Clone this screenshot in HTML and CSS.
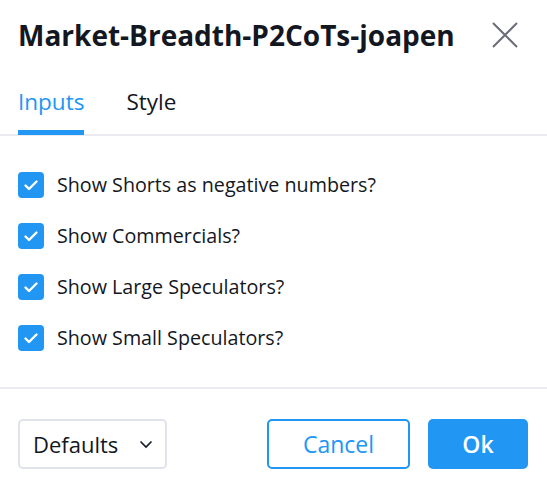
FILE: index.html
```html
<!DOCTYPE html>
<html>
<head>
<meta charset="utf-8">
<link rel="stylesheet" href="styles.css">
</head>
<body>
<div class="dialog">
  <div class="header">
    <div class="title">Market-Breadth-P2CoTs-joapen</div>
    <button class="close" aria-label="Close">
      <svg width="28" height="28" viewBox="0 0 28 28"><path d="M2 2 L26 26 M26 2 L2 26" stroke="#6a6d78" stroke-width="2" fill="none"/></svg>
    </button>
  </div>
  <div class="tabs">
    <div class="tab active">Inputs</div>
    <div class="tab">Style</div>
  </div>
  <div class="content">
    <label class="row"><span class="check"><svg width="26" height="26" viewBox="0 0 26 26"><path d="M7.5 13.5 L11 17 L18.5 9.5" stroke="#fff" stroke-width="2.4" fill="none" stroke-linecap="round" stroke-linejoin="round"/></svg></span><span class="label">Show Shorts as negative numbers?</span></label>
    <label class="row"><span class="check"><svg width="26" height="26" viewBox="0 0 26 26"><path d="M7.5 13.5 L11 17 L18.5 9.5" stroke="#fff" stroke-width="2.4" fill="none" stroke-linecap="round" stroke-linejoin="round"/></svg></span><span class="label">Show Commercials?</span></label>
    <label class="row"><span class="check"><svg width="26" height="26" viewBox="0 0 26 26"><path d="M7.5 13.5 L11 17 L18.5 9.5" stroke="#fff" stroke-width="2.4" fill="none" stroke-linecap="round" stroke-linejoin="round"/></svg></span><span class="label">Show Large Speculators?</span></label>
    <label class="row"><span class="check"><svg width="26" height="26" viewBox="0 0 26 26"><path d="M7.5 13.5 L11 17 L18.5 9.5" stroke="#fff" stroke-width="2.4" fill="none" stroke-linecap="round" stroke-linejoin="round"/></svg></span><span class="label">Show Small Speculators?</span></label>
  </div>
  <div class="footer">
    <button class="defaults">Defaults <svg width="14" height="9" viewBox="0 0 14 9"><path d="M1.5 1.5 L7 7 L12.5 1.5" stroke="#131722" stroke-width="1.6" fill="none"/></svg></button>
    <div class="actions">
      <button class="btn cancel">Cancel</button>
      <button class="btn ok">Ok</button>
    </div>
  </div>
</div>
</body>
</html>
```
FILE: styles.css
```css
* { box-sizing: border-box; }
html, body { margin: 0; padding: 0; background: #fff; }
body { font-family: "Open Sans", "DejaVu Sans", sans-serif; color: #131722; }
.dialog { width: 547px; height: 493px; display: flex; flex-direction: column; }
.header { display: flex; align-items: center; justify-content: space-between; padding: 0 28px 0 18px; height: 69px; }
.title { font-size: 28px; font-weight: 700; letter-spacing: 0; }
.close { background: none; border: 0; padding: 0; width: 28px; height: 28px; display: flex; }
.tabs { display: flex; gap: 42px; padding: 0 18px; border-bottom: 2px solid #e9ebf0; height: 67px; align-items: stretch; }
.tab { font-size: 22.5px; display: flex; align-items: center; padding-top: 4px; border-bottom: 5px solid transparent; margin-bottom: -1px; }
.tab.active { color: #2196f3; border-bottom-color: #2196f3; }
.content { padding: 36px 18px 0; display: flex; flex-direction: column; gap: 25px; height: 253px; border-bottom: 2px solid #e9ebf0; }
.row { display: flex; align-items: center; gap: 13px; height: 26px; }
.check { width: 26px; height: 26px; border-radius: 4px; background: #2196f3; display: flex; flex: none; }
.label { font-size: 19.7px; line-height: 26px; }
.footer { display: flex; justify-content: space-between; align-items: center; padding: 30px 19px 0 18px; }
.defaults { height: 50px; width: 149px; border: 2px solid #e0e3eb; border-radius: 5px; background: #fff; font-family: inherit; font-size: 22px; color: #131722; display: flex; align-items: center; justify-content: space-between; padding: 0 12px 0 13px; }
.actions { display: flex; gap: 18px; }
.btn { height: 50px; border-radius: 5px; font-family: inherit; font-size: 23px; }
.cancel { width: 143px; background: #fff; border: 2px solid #2196f3; color: #2196f3; }
.ok { width: 100px; background: #2196f3; border: 0; color: #fff; font-weight: 600; }
```
